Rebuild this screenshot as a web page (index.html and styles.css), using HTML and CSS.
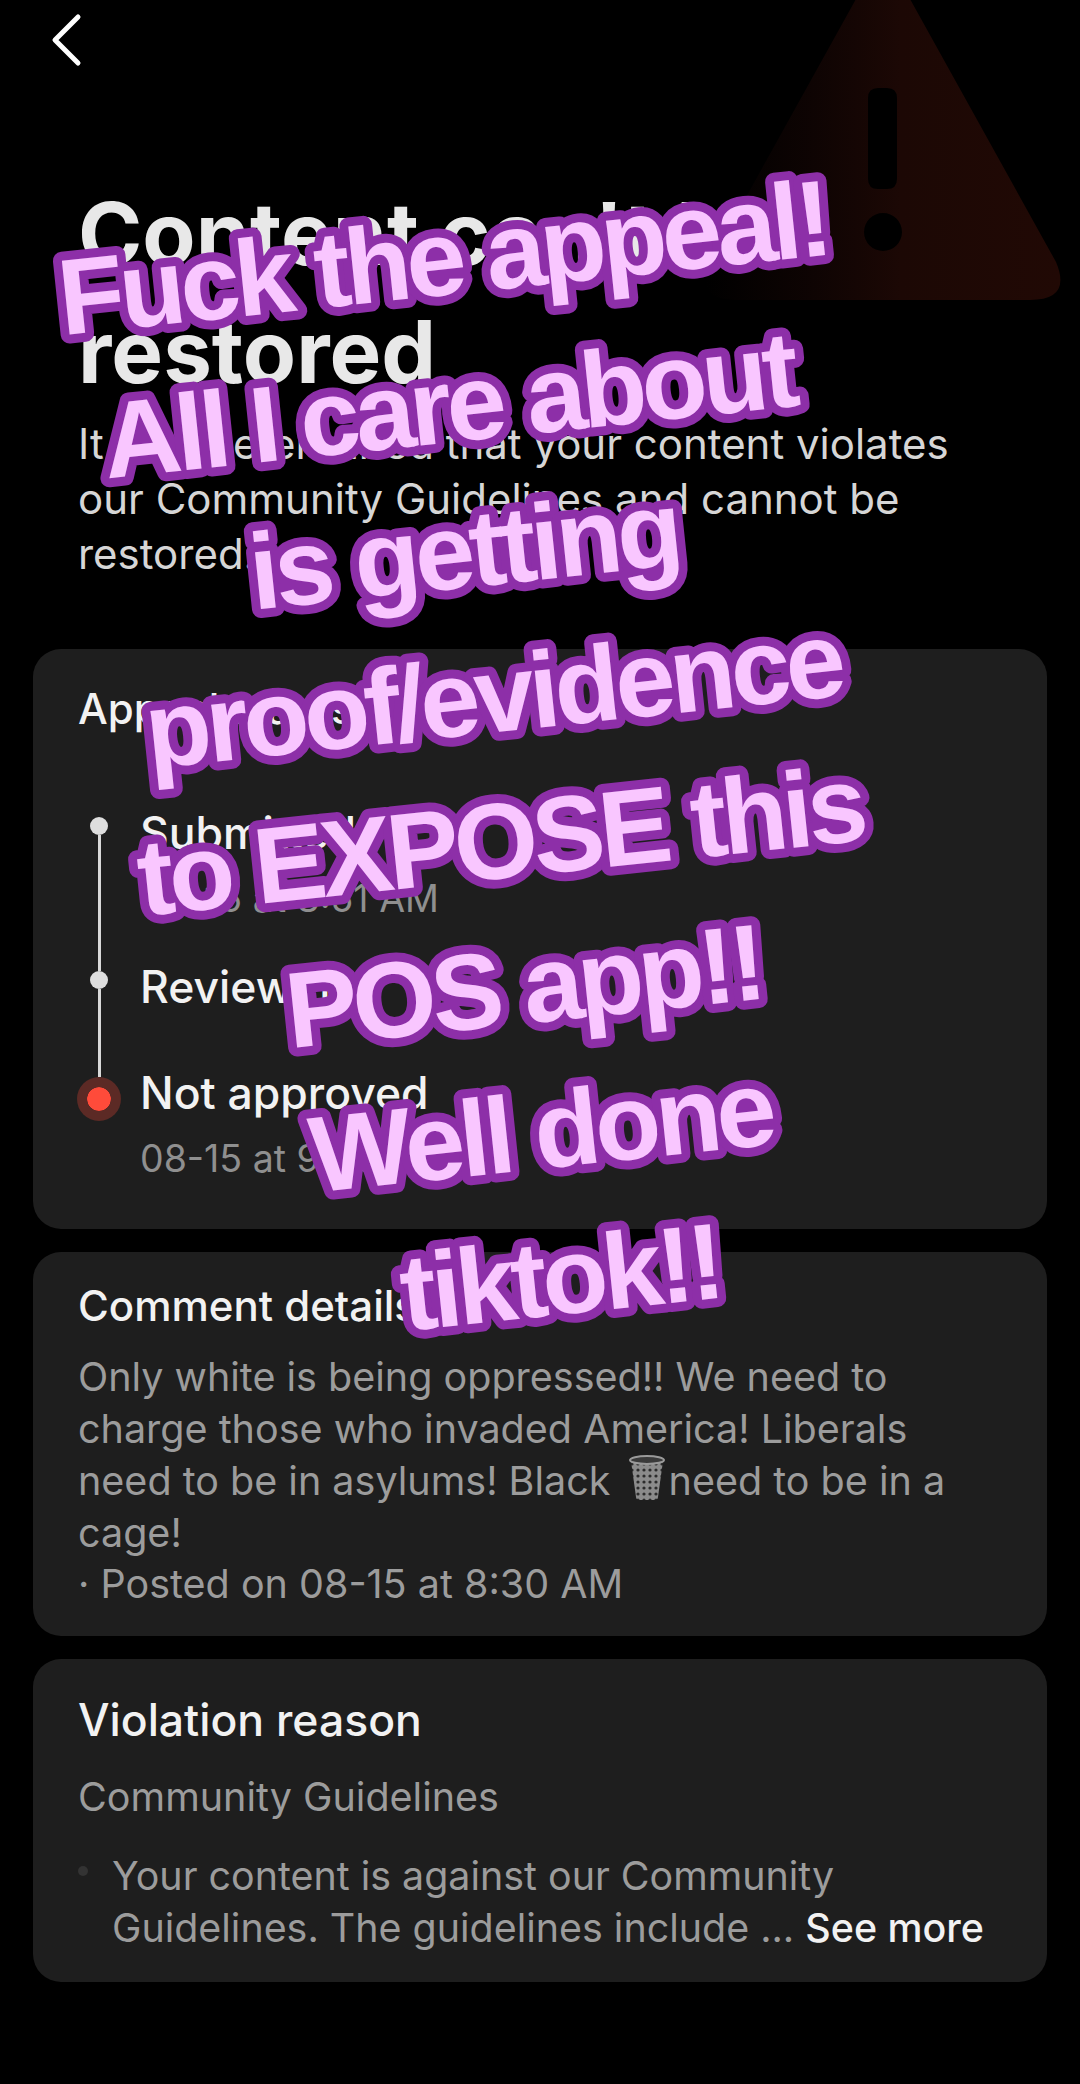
FILE: index.html
```html
<!DOCTYPE html>
<html lang="en">
<head>
    <meta charset="UTF-8">
    <meta name="viewport" content="width=device-width, initial-scale=1.0">
    <title>Appeal status</title>
    <link rel="stylesheet" href="styles.css">
</head>
<body>

<div class="page">
    <svg class="warning" width="360" height="320" viewBox="0 0 360 320">
        <defs>
            <linearGradient id="warnFade" x1="0" y1="0" x2="1" y2="0">
                <stop offset="0" stop-color="#000"/>
                <stop offset="0.3" stop-color="#0e0403"/>
                <stop offset="0.55" stop-color="#1c0805"/>
                <stop offset="1" stop-color="#210905"/>
            </linearGradient>
        </defs>
        <path fill="url(#warnFade)" fill-rule="evenodd" d="M141 -10 Q163 -50 185 -10 L336 262 Q352 300 310 300 L16 300 Q-26 300 -10 262 Z M148 98 Q148 88 158 88 L167 88 Q177 88 177 98 L177 179 Q177 189 167 189 L158 189 Q148 189 148 179 Z M163 213 A19 19 0 1 0 163 251 A19 19 0 1 0 163 213 Z"/>
    </svg>

    <header class="top-bar">
        <svg width="36" height="56" viewBox="0 0 36 56">
            <path d="M30 5 L7 28 L30 51" fill="none" stroke="#fff" stroke-width="5" stroke-linecap="round" stroke-linejoin="round"/>
        </svg>
    </header>

    <section class="intro">
        <h1>Content can't be restored</h1>
        <p>It was determined that your content violates our Community Guidelines and cannot be restored.</p>
    </section>

    <section class="card status-card">
        <h2 class="card-title">Appeal status</h2>
        <div class="steps">
            <div class="step">
                <div class="marker marker-first"><span class="stub"></span><span class="dot"></span><span class="rail"></span></div>
                <div class="step-body">
                    <div class="step-title">Submitted</div>
                    <div class="step-date">08-15 at 8:51 AM</div>
                </div>
            </div>
            <div class="step">
                <div class="marker"><span class="stub"></span><span class="dot"></span><span class="rail"></span></div>
                <div class="step-body">
                    <div class="step-title">Reviewing</div>
                </div>
            </div>
            <div class="step step-last">
                <div class="marker"><span class="stub"></span><span class="dot dot-red"></span></div>
                <div class="step-body">
                    <div class="step-title">Not approved</div>
                    <div class="step-date">08-15 at 9:00 AM</div>
                </div>
            </div>
        </div>
    </section>

    <section class="card comment-card">
        <h2 class="card-title">Comment details</h2>
        <p class="comment-text">Only white is being oppressed!! We need to charge those who invaded America! Liberals need to be in asylums! Black <svg class="trash" width="36" height="46" viewBox="0 0 36 46">
                <defs>
                    <pattern id="mesh" width="6" height="6" patternUnits="userSpaceOnUse">
                        <rect width="6" height="6" fill="#8b8b8b"/>
                        <circle cx="3" cy="3" r="1.6" fill="#2c2c2c"/>
                    </pattern>
                </defs>
                <path d="M2 6 L7 42 Q7 45 11 45 L25 45 Q29 45 29 42 L34 6 Z" fill="url(#mesh)"/>
                <ellipse cx="18" cy="5" rx="17" ry="4" fill="#3a3a3a" stroke="#9a9a9a" stroke-width="2"/>
            </svg>need to be in a cage!<br>· Posted on 08-15 at 8:30 AM</p>
    </section>

    <section class="card reason-card">
        <h2 class="card-title reason-title">Violation reason</h2>
        <p class="reason-name">Community Guidelines</p>
        <div class="reason-item">
            <span class="bullet"></span>
            <p>Your content is against our Community Guidelines. The guidelines include ... <span class="see-more">See more</span></p>
        </div>
    </section>

    <svg class="caption" width="1080" height="2084" viewBox="0 0 1080 2084">
        <g transform="translate(499 775) rotate(-6)">
            <text class="caption-line" x="-2" y="-483">Fuck the appeal!</text>
            <text class="caption-line" x="-12" y="-336">All I care about</text>
            <text class="caption-line" x="-12" y="-190">is getting</text>
            <text class="caption-line" x="2" y="-43">proof/evidence</text>
            <text class="caption-line" x="-6" y="103">to EXPOSE this</text>
            <text class="caption-line" x="2" y="250">POS app!!</text>
            <text class="caption-line" x="4" y="396">Well done</text>
            <text class="caption-line" x="8" y="543">tiktok!!</text>
        </g>
    </svg>
</div>

</body>
</html>
```

FILE: styles.css
```css
* {
    box-sizing: border-box;
}
body {
    margin: 0;
    padding: 0;
    background-color: #000;
    font-family: Inter, "Noto Sans", sans-serif;
    color: #fff;
}
.page {
    position: relative;
    width: 1080px;
    height: 2084px;
    overflow: hidden;
    padding: 12px 33px 0;
}
.warning {
    position: absolute;
    top: 0;
    left: 720px;
    overflow: visible;
}
.top-bar {
    position: relative;
    height: 56px;
    padding-left: 15px;
}
.intro {
    position: relative;
    padding: 0 45px;
    margin-top: 107px;
}
.intro h1 {
    margin: 0;
    font-size: 87px;
    line-height: 118px;
    font-weight: 700;
    color: #e8e8e8;
}
.intro p {
    margin: 5px 0 0;
    font-size: 42px;
    line-height: 55px;
    color: #d6d6d6;
}
.card {
    background-color: #1e1e1e;
    border-radius: 28px;
    padding: 0 45px;
    margin-bottom: 23px;
}
.status-card {
    margin-top: 68px;
    height: 580px;
    padding-top: 34px;
}
.card-title {
    margin: 0;
    font-size: 42px;
    line-height: 52px;
    font-weight: 500;
    color: #f2f2f2;
}
.steps {
    margin-top: 72px;
    margin-left: -1px;
}
.step {
    display: flex;
    gap: 19px;
    min-height: 106px;
}
.marker {
    display: flex;
    flex-direction: column;
    align-items: center;
    flex: none;
    width: 44px;
}
.stub {
    width: 3px;
    height: 10px;
    background-color: #d9d9d9;
}
.marker-first .stub {
    background-color: transparent;
}
.rail {
    flex: 1;
    width: 3px;
    background-color: #d9d9d9;
}
.dot {
    flex: none;
    width: 18px;
    height: 18px;
    border-radius: 50%;
    background-color: #dedede;
}
.dot-red {
    width: 44px;
    height: 44px;
    background-color: #ff4b3a;
    background-clip: content-box;
    padding: 10px;
    box-shadow: inset 0 0 0 10px #5c2a25;
}
.step-body {
    padding-bottom: 36px;
}
.step-last .step-body {
    padding-bottom: 0;
}
.step-title {
    font-size: 44.5px;
    line-height: 52px;
    font-weight: 500;
    color: #f2f2f2;
}
.step-date {
    margin-top: 14px;
    font-size: 37.5px;
    line-height: 52px;
    color: #8f8f8f;
}
.comment-card {
    height: 384px;
    padding-top: 28px;
}
.comment-text {
    margin: 20px 0 0;
    font-size: 39.5px;
    line-height: 51.5px;
    color: #9c9c9c;
}
.trash {
    vertical-align: -6px;
    margin-left: 7px;
    margin-right: 4px;
}
.reason-card {
    height: 323px;
    padding-top: 35px;
}
.reason-title {
    font-size: 44.5px;
}
.reason-name {
    margin: 25px 0 0;
    font-size: 39.5px;
    line-height: 52px;
    color: #9c9c9c;
}
.reason-item {
    display: flex;
    gap: 24px;
    margin-top: 28px;
}
.reason-item p {
    margin: 0;
    font-size: 39.4px;
    line-height: 51.5px;
    color: #9c9c9c;
}
.bullet {
    flex: none;
    width: 10px;
    height: 10px;
    margin-top: 15px;
    border-radius: 50%;
    background-color: #333;
}
.see-more {
    font-weight: 500;
    color: #f2f2f2;
}
.caption {
    position: absolute;
    top: 0;
    left: 0;
}
.caption-line {
    font-family: "Liberation Sans", Arial, sans-serif;
    font-weight: 700;
    font-size: 108px;
    letter-spacing: -5px;
    text-anchor: middle;
    fill: #f9c6ff;
    stroke: #8d2fa8;
    stroke-width: 18px;
    stroke-linejoin: round;
    paint-order: stroke fill;
}
```
